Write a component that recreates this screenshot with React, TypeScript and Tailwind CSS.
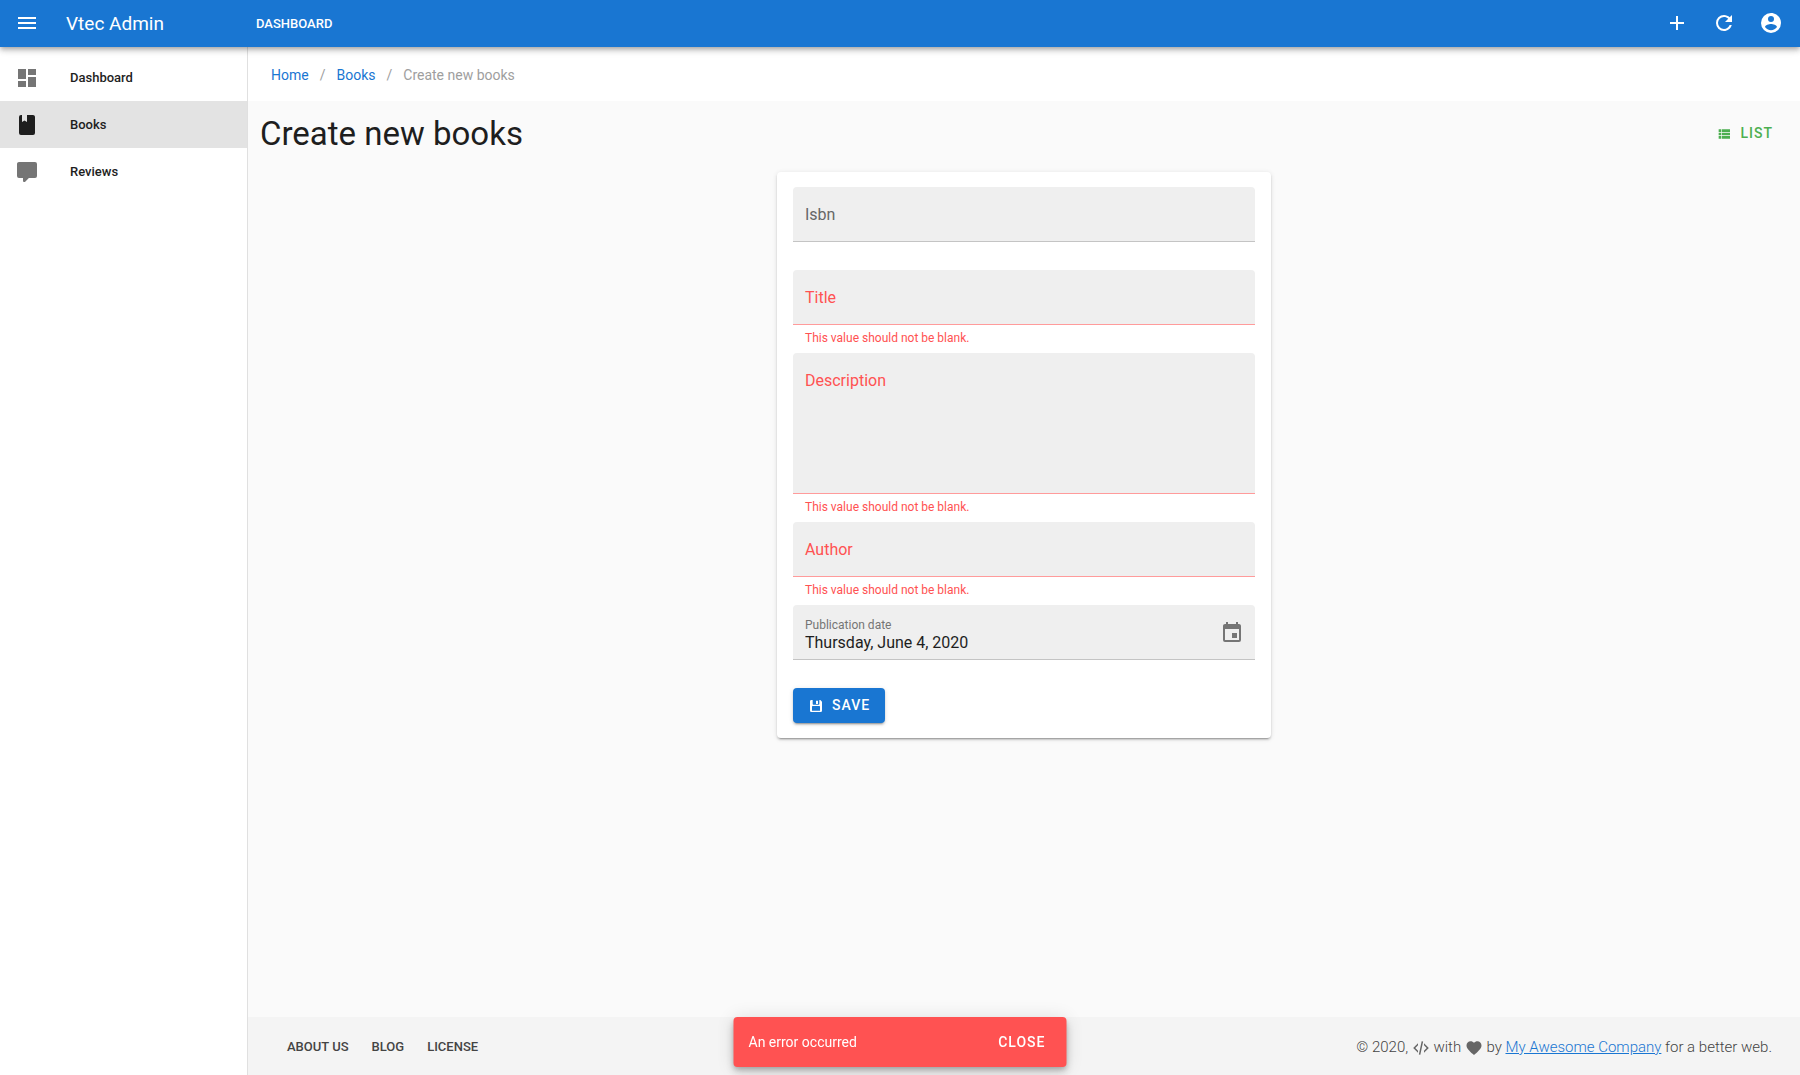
import type { ReactNode } from "react";

const icons = {
  menu: "M3,6H21V8H3V6M3,11H21V13H3V11M3,16H21V18H3V16Z",
  dashboard: "M13,3V9H21V3M13,21H21V11H13M3,21H11V15H3M3,13H11V3H3V13Z",
  book: "M18,22A2,2 0 0,0 20,20V4C20,2.89 19.1,2 18,2H12V9L9.5,7.5L7,9V2H6A2,2 0 0,0 4,4V20A2,2 0 0,0 6,22H18Z",
  comment:
    "M9,22A1,1 0 0,1 8,21V18H4A2,2 0 0,1 2,16V4C2,2.89 2.9,2 4,2H20A2,2 0 0,1 22,4V16A2,2 0 0,1 20,18H13.9L10.2,21.71C10,21.9 9.75,22 9.5,22V22H9Z",
  plus: "M19,13H13V19H11V13H5V11H11V5H13V11H19V13Z",
  refresh:
    "M17.65,6.35C16.2,4.9 14.21,4 12,4A8,8 0 0,0 4,12A8,8 0 0,0 12,20C15.73,20 18.84,17.45 19.73,14H17.65C16.83,16.33 14.61,18 12,18A6,6 0 0,1 6,12A6,6 0 0,1 12,6C13.66,6 15.14,6.69 16.22,7.78L13,11H20V4L17.65,6.35Z",
  account:
    "M12,19.2C9.5,19.2 7.29,17.92 6,16C6.03,14 10,12.9 12,12.9C14,12.9 17.97,14 18,16C16.71,17.92 14.5,19.2 12,19.2M12,5A3,3 0 0,1 15,8A3,3 0 0,1 12,11A3,3 0 0,1 9,8A3,3 0 0,1 12,5M12,2A10,10 0 0,0 2,12A10,10 0 0,0 12,22A10,10 0 0,0 22,12C22,6.47 17.5,2 12,2Z",
  list: "M9,5V9H21V5M9,19H21V15H9M9,14H21V10H9M4,9H8V5H4M4,19H8V15H4M4,14H8V10H4V14Z",
  calendar:
    "M19,19H5V8H19M16,1V3H8V1H6V3H5C3.89,3 3,3.89 3,5V19A2,2 0 0,0 5,21H19A2,2 0 0,0 21,19V5C21,3.89 20.1,3 19,3H18V1M17,12H12V17H17V12Z",
  save: "M5,3A2,2 0 0,0 3,5V19A2,2 0 0,0 5,21H19A2,2 0 0,0 21,19V5.5L18.5,3H17V9A1,1 0 0,1 16,10H8A1,1 0 0,1 7,9V3H5M12,4V9H15V4H12M7,12H17A1,1 0 0,1 18,13V19H6V13A1,1 0 0,1 7,12Z",
  code: "M12.89,3L14.85,3.4L11.11,21L9.15,20.6L12.89,3M19.59,12L16,8.41V5.58L22.42,12L16,18.41V15.58L19.59,12M1.58,12L8,5.58V8.41L4.41,12L8,15.58V18.41L1.58,12Z",
  heart:
    "M12,21.35L10.55,20.03C5.4,15.36 2,12.27 2,8.5C2,5.41 4.42,3 7.5,3C9.24,3 10.91,3.81 12,5.08C13.09,3.81 14.76,3 16.5,3C19.58,3 22,5.41 22,8.5C22,12.27 18.6,15.36 13.45,20.03L12,21.35Z",
};

function Icon({ name, className = "size-6" }: { name: keyof typeof icons; className?: string }) {
  return (
    <svg viewBox="0 0 24 24" fill="currentColor" aria-hidden="true" className={className}>
      <path d={icons[name]} />
    </svg>
  );
}

function NavItem({ icon, active, children }: { icon: keyof typeof icons; active?: boolean; children: ReactNode }) {
  return (
    <a
      href="#"
      aria-current={active ? "page" : undefined}
      className={`flex h-[47px] items-center gap-[31px] px-[15px] text-[13px] font-medium text-[#1e1e1e] ${active ? "bg-[#e3e3e3]" : ""}`}
    >
      <Icon name={icon} className={`size-6 ${active ? "text-[#1e1e1e]" : "text-[#757575]"}`} />
      {children}
    </a>
  );
}

function Field({ id, label, error, multiline }: { id: string; label: string; error?: string; multiline?: boolean }) {
  const line = error ? "border-[#ff9b9b]" : "border-[#c4c4c4]";
  const box = `block w-full resize-none rounded-t border-b bg-[#efefef] px-3 pt-6 text-base text-[#1e1e1e] outline-none ${line}`;
  return (
    <div className="relative">
      <label
        htmlFor={id}
        className={`absolute top-[18px] left-3 text-base leading-5 ${error ? "text-[#ff5252]" : "text-[#666666]"}`}
      >
        {label}
      </label>
      {multiline ? (
        <textarea id={id} className={`${box} h-[141px]`} aria-invalid />
      ) : (
        <input id={id} type="text" className={`${box} h-[55px]`} aria-invalid={!!error} />
      )}
      <p className="h-7 px-3 pt-[7px] text-[12px] leading-3 text-[#ff5252]">{error}</p>
    </div>
  );
}

const blank = "This value should not be blank.";

export default function App() {
  return (
    <div className="flex min-h-screen flex-col bg-[#fafafa] font-['Roboto',sans-serif] text-[#1e1e1e]">
      <header className="relative z-10 flex h-[47px] items-center bg-[#1976d2] pr-[17px] pb-px pl-[15px] text-white shadow-[0_2px_4px_-1px_rgba(0,0,0,0.2),0_4px_5px_rgba(0,0,0,0.14),0_1px_10px_rgba(0,0,0,0.12)]">
        <div className="flex w-[241px] items-center gap-[27px]">
          <button type="button" aria-label="Menu">
            <Icon name="menu" />
          </button>
          <span className="pt-0.5 text-[19px]">Vtec Admin</span>
        </div>
        <a href="#" className="pt-0.5 text-[13px] font-medium">
          DASHBOARD
        </a>
        <div className="ml-auto flex items-center gap-[23px]">
          <button type="button" aria-label="Create">
            <Icon name="plus" />
          </button>
          <button type="button" aria-label="Refresh">
            <Icon name="refresh" />
          </button>
          <button type="button" aria-label="Account">
            <Icon name="account" />
          </button>
        </div>
      </header>

      <div className="flex flex-1">
        <nav className="w-[248px] shrink-0 border-r border-[#e0e0e0] bg-white pt-[7px]">
          <NavItem icon="dashboard">Dashboard</NavItem>
          <NavItem icon="book" active>
            Books
          </NavItem>
          <NavItem icon="comment">Reviews</NavItem>
        </nav>

        <div className="flex min-w-0 flex-1 flex-col">
          <nav aria-label="Breadcrumb" className="flex h-[54px] items-center gap-[11px] bg-white px-[23px] pt-0.5 text-[14px] text-[#9e9e9e]">
            <a href="#" className="text-[#1976d2]">
              Home
            </a>
            <span>/</span>
            <a href="#" className="text-[#1976d2]">
              Books
            </a>
            <span>/</span>
            <span>Create new books</span>
          </nav>

          <main className="flex-1 px-3">
            <div className="flex h-[71px] items-center justify-between pr-[15px] pb-[6px]">
              <h1 className="text-[33px]">Create new books</h1>
              <a href="#" className="flex items-center gap-2 text-[14px] font-medium tracking-[1px] text-[#4caf50]">
                <Icon name="list" className="size-4" />
                LIST
              </a>
            </div>

            <form
              className="mx-auto w-full max-w-[494px] rounded bg-white px-4 py-[15px] shadow-[0_3px_1px_-2px_rgba(0,0,0,0.2),0_2px_2px_rgba(0,0,0,0.14),0_1px_5px_rgba(0,0,0,0.12)]"
              onSubmit={(event) => event.preventDefault()}
            >
              <Field id="isbn" label="Isbn" />
              <Field id="title" label="Title" error={blank} />
              <Field id="description" label="Description" error={blank} multiline />
              <Field id="author" label="Author" error={blank} />
              <div className="relative mb-7">
                <label htmlFor="date" className="absolute top-3 left-3 text-[12px] leading-4 text-[#757575]">
                  Publication date
                </label>
                <input
                  id="date"
                  type="text"
                  readOnly
                  value="Thursday, June 4, 2020"
                  className="block h-[55px] w-full rounded-t border-b border-[#c4c4c4] bg-[#efefef] px-3 pt-5 text-base outline-none"
                />
                <button type="button" aria-label="Pick a date" className="absolute top-4 right-[11px] text-[#757575]">
                  <Icon name="calendar" />
                </button>
              </div>
              <button
                type="submit"
                className="flex h-[35px] items-center gap-2 rounded bg-[#1976d2] px-[15px] text-[14px] font-medium tracking-[1px] text-white shadow-[0_3px_1px_-2px_rgba(0,0,0,0.2),0_2px_2px_rgba(0,0,0,0.14),0_1px_5px_rgba(0,0,0,0.12)]"
              >
                <Icon name="save" className="size-4" />
                SAVE
              </button>
            </form>
          </main>

          <footer className="flex h-[58px] items-center justify-between bg-[#f4f4f4] pt-0.5 pr-7 pl-[39px] text-[#444444]">
            <div className="flex gap-[23px] text-[13px] font-medium">
              <a href="#">ABOUT US</a>
              <a href="#">BLOG</a>
              <a href="#">LICENSE</a>
            </div>
            <p className="text-[15px] font-light">
              © 2020, <Icon name="code" className="inline size-[18px] text-[#666666]" /> with{" "}
              <Icon name="heart" className="inline size-[18px] text-[#666666]" /> by{" "}
              <a href="#" className="text-[#1976d2] underline">
                My Awesome Company
              </a>{" "}
              for a better web.
            </p>
          </footer>
        </div>
      </div>

      <div
        role="alert"
        className="fixed bottom-2 left-1/2 z-20 flex h-[50px] w-[333px] -translate-x-1/2 items-center justify-between rounded bg-[#ff5252] pr-[21px] pl-[15px] text-[14px] text-white shadow-[0_3px_5px_-1px_rgba(0,0,0,0.2),0_6px_10px_rgba(0,0,0,0.14),0_1px_18px_rgba(0,0,0,0.12)]"
      >
        An error occurred
        <button type="button" className="font-medium tracking-[1px]">
          CLOSE
        </button>
      </div>
    </div>
  );
}
